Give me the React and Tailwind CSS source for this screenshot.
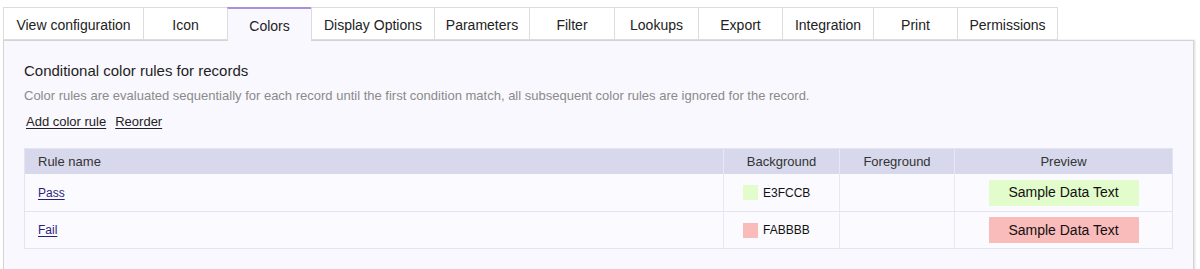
import React from 'react';

const tabs = [
  { label: 'View configuration', w: 'w-[140px]' },
  { label: 'Icon', w: 'w-[84px]' },
  { label: 'Colors', w: 'w-[84px]' },
  { label: 'Display Options', w: 'w-[123px]' },
  { label: 'Parameters', w: 'w-[95px]' },
  { label: 'Filter', w: 'w-[85px]' },
  { label: 'Lookups', w: 'w-[84px]' },
  { label: 'Export', w: 'w-[84px]' },
  { label: 'Integration', w: 'w-[91px]' },
  { label: 'Print', w: 'w-[84px]' },
  { label: 'Permissions', w: 'w-[101px]' },
];

const rules = [
  { name: 'Pass', color: 'E3FCCB', swatch: 'bg-[#e3fccb]' },
  { name: 'Fail', color: 'FABBBB', swatch: 'bg-[#fabbbb]' },
];

export default function App() {
  const active = 'Colors';

  return (
    <div className="w-[1200px] h-[269px] bg-white overflow-hidden pt-[7px] pl-[3px] font-['Liberation_Sans',Arial,sans-serif] text-[#222]">
      {/* tab strip */}
      <div className="flex h-[33px]">
        {tabs.map((t) => (
          <div
            key={t.label}
            className={`${t.w} flex items-center justify-center pt-[3px] text-[14px] border-l border-[#dcdcdc] last:border-r
              ${t.label === active ? 'bg-[#f9f8fe] border-t-2 border-t-[#a98fdc] relative z-10 h-[34px]' : 'bg-white border-t border-b'}`}
          >
            {t.label}
          </div>
        ))}
      </div>

      {/* panel */}
      <div className="w-[1191px] h-[240px] bg-[#f9f8fe] border border-[#d4d4d4] border-b-0 shadow-[1px_0_2px_rgba(0,0,0,0.15)] px-[20px] pt-[21px]">
        <h2 className="text-[15px] leading-[18px] text-[#1e1e1e]">Conditional color rules for records</h2>
        <p className="mt-[8px] text-[13px] leading-[16px] text-[#8a8a8a]">
          Color rules are evaluated sequentially for each record until the first condition match, all subsequent color rules are ignored for the record.
        </p>
        <div className="mt-[10px] flex gap-[9px] text-[13px] leading-[16px] ml-[2px]">
          <span className="underline underline-offset-2">Add color rule</span>
          <span className="underline underline-offset-2">Reorder</span>
        </div>

        <div className="mt-[18px] w-[1149px] border border-[#e4e3f2] text-[13px]">
          <div className="flex h-[25px] bg-[#d8d8ec] text-[#333]">
            <div className="w-[698px] flex items-center pl-[13px]">Rule name</div>
            <div className="w-[116px] flex items-center justify-center border-l border-[#e8e7f5]">Background</div>
            <div className="w-[115px] flex items-center justify-center border-l border-[#e8e7f5]">Foreground</div>
            <div className="flex-1 flex items-center justify-center border-l border-[#e8e7f5]">Preview</div>
          </div>
          {rules.map((r, i) => (
            <div key={r.name} className={`flex h-[37px] bg-[#fbfbff] ${i > 0 ? 'border-t border-[#e4e3f2]' : ''}`}>
              <div className="w-[698px] flex items-center pl-[13px]">
                <span className="text-[12px] text-[#2b1f7d] underline underline-offset-2">{r.name}</span>
              </div>
              <div className="w-[116px] flex items-center pl-[19px] gap-[5px] border-l border-[#e8e7f5] text-[12px] text-[#111]">
                <span className={`w-[15px] h-[15px] ${r.swatch}`} />
                {r.color}
              </div>
              <div className="w-[115px] border-l border-[#e8e7f5]" />
              <div className="flex-1 flex items-center justify-center border-l border-[#e8e7f5]">
                <div className={`w-[150px] h-[26px] flex items-center justify-center text-[14px] text-[#111] ${r.swatch}`}>
                  Sample Data Text
                </div>
              </div>
            </div>
          ))}
        </div>
      </div>
    </div>
  );
}
